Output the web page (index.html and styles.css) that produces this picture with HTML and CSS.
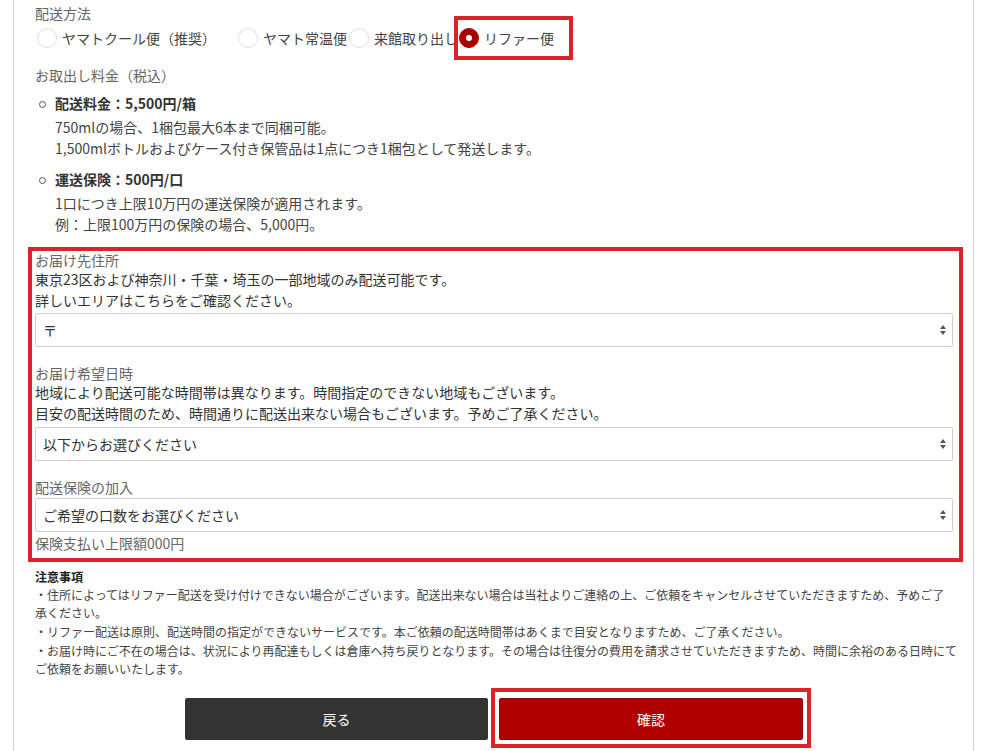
FILE: index.html
```html
<!DOCTYPE html>
<html lang="ja">
<head>
<meta charset="utf-8">
<title>配送方法</title>
<link rel="stylesheet" href="styles.css">
</head>
<body>
<div class="page">
  <div class="label">配送方法</div>
  <div class="radios">
    <label class="radio radio--first"><span class="dot"></span><span class="radio-text">ヤマトクール便（推奨）</span></label>
    <label class="radio radio--second"><span class="dot"></span><span class="radio-text">ヤマト常温便</span></label>
    <label class="radio radio--third"><span class="dot"></span><span class="radio-text">来館取り出し</span></label>
    <label class="radio radio--checked"><span class="dot"></span><span class="radio-text">リファー便</span></label>
  </div>

  <div class="label label--fees">お取出し料金（税込）</div>
  <ul class="fees">
    <li class="fee">
      <div class="fee-title">配送料金：5,500円/箱</div>
      <div class="fee-desc">750mlの場合、1梱包最大6本まで同梱可能。<br>1,500mlボトルおよびケース付き保管品は1点につき1梱包として発送します。</div>
    </li>
    <li class="fee">
      <div class="fee-title">運送保険：500円/口</div>
      <div class="fee-desc">1口につき上限10万円の運送保険が適用されます。<br>例：上限100万円の保険の場合、5,000円。</div>
    </li>
  </ul>

  <div class="marked">
    <div class="field-label">お届け先住所</div>
    <div class="field-text">東京23区および神奈川・千葉・埼玉の一部地域のみ配送可能です。<br>詳しいエリアはこちらをご確認ください。</div>
    <div class="select-wrap select-wrap--first">
      <select class="select"><option>〒</option></select>
      <svg class="arrows" width="6" height="10" viewBox="0 0 6 10"><path d="M3 0 L6 4 L0 4 Z M0 6 L6 6 L3 10 Z" fill="#555"/></svg>
    </div>

    <div class="field-label field-label--gap">お届け希望日時</div>
    <div class="field-text">地域により配送可能な時間帯は異なります。時間指定のできない地域もございます。<br>目安の配送時間のため、時間通りに配送出来ない場合もございます。予めご了承ください。</div>
    <div class="select-wrap select-wrap--second">
      <select class="select"><option>以下からお選びください</option></select>
      <svg class="arrows" width="6" height="10" viewBox="0 0 6 10"><path d="M3 0 L6 4 L0 4 Z M0 6 L6 6 L3 10 Z" fill="#555"/></svg>
    </div>

    <div class="field-label field-label--gap">配送保険の加入</div>
    <div class="select-wrap select-wrap--third">
      <select class="select"><option>ご希望の口数をお選びください</option></select>
      <svg class="arrows" width="6" height="10" viewBox="0 0 6 10"><path d="M3 0 L6 4 L0 4 Z M0 6 L6 6 L3 10 Z" fill="#555"/></svg>
    </div>
    <div class="field-note">保険支払い上限額000円</div>
  </div>

  <div class="notes">
    <div class="notes-title">注意事項</div>
    <p class="note">・住所によってはリファー配送を受け付けできない場合がございます。配送出来ない場合は当社よりご連絡の上、ご依頼をキャンセルさせていただきますため、予めご了<br>承ください。</p>
    <p class="note">・リファー配送は原則、配送時間の指定ができないサービスです。本ご依頼の配送時間帯はあくまで目安となりますため、ご了承ください。</p>
    <p class="note">・お届け時にご不在の場合は、状況により再配達もしくは倉庫へ持ち戻りとなります。その場合は往復分の費用を請求させていただきますため、時間に余裕のある日時にてご依頼をお願いいたします。</p>
  </div>

  <div class="actions">
    <button class="btn btn--back" type="button">戻る</button>
    <button class="btn btn--confirm" type="button">確認</button>
  </div>
</div>
</body>
</html>
```

FILE: styles.css
```css
* { box-sizing: border-box; }

html, body {
  margin: 0;
  padding: 0;
  background: #fff;
}

body {
  font-family: "Noto Sans CJK JP", "Noto Sans", sans-serif;
  font-size: 14px;
  color: #333;
  overflow: hidden;
}

.page {
  margin: 0 13px;
  min-height: 800px;
  border-left: 1px solid #d4d4d4;
  border-right: 1px solid #d4d4d4;
  padding: 3px 20px 0 21px;
}

.label {
  font-size: 14px;
  line-height: 21px;
  color: #666;
}

.label--fees {
  margin-top: 16px;
}

/* radios */
.radios {
  margin-top: 3px;
  height: 22px;
  display: flex;
  align-items: center;
}

.radio {
  position: relative;
  display: inline-flex;
  align-items: center;
  gap: 5px;
  height: 22px;
  color: #444;
  font-size: 14px;
  line-height: 22px;
  white-space: nowrap;
}

.radio--first { margin-left: 2px; margin-right: 22px; }
.radio--second { margin-right: 2px; }
.radio--third { margin-right: 1px; }

.dot {
  width: 20px;
  height: 20px;
  border-radius: 50%;
  border: 1px solid #e0e0e0;
  background: #fff;
  box-shadow: inset 0 1px 1px rgba(0,0,0,0.04);
  flex: none;
}

.radio--checked .dot {
  background: #a80000;
  border-color: #a80000;
  position: relative;
}

.radio--checked .dot::before {
  content: "";
  position: absolute;
  left: 6px;
  top: 6px;
  width: 6px;
  height: 6px;
  border-radius: 50%;
  background: #fff;
}

.radio--checked::after {
  content: "";
  position: absolute;
  left: -5px;
  right: -19px;
  top: -11px;
  bottom: -11px;
  border: 4px solid #dc2329;
  pointer-events: none;
}

/* fees */
.fees {
  list-style: none;
  margin: 7px 0 0 0;
  padding: 0 0 0 20px;
}

.fee + .fee {
  margin-top: 10px;
}

.fee-title {
  position: relative;
  font-weight: 700;
  line-height: 21px;
  color: #333;
}

.fee-title::before {
  content: "";
  position: absolute;
  left: -16px;
  top: 8px;
  width: 5px;
  height: 5px;
  border: 1px solid #555;
  border-radius: 50%;
}

.fee-desc {
  margin-top: 3px;
  line-height: 21px;
  color: #444;
}

/* marked box */
.marked {
  margin: 12px -10px 0 -7px;
  border: 4px solid #dc2329;
  padding: 0 6px 6px 3px;
}

.field-label {
  line-height: 18px;
  color: #666;
}

.field-label--gap {
  margin-top: 17px;
}

.field-text {
  line-height: 21px;
  color: #333;
}

.select-wrap {
  position: relative;
}

.select-wrap--first { margin-top: 2px; }
.select-wrap--second { margin-top: 3px; }
.select-wrap--third { margin-top: 2px; }

.select {
  display: block;
  width: 100%;
  height: 34px;
  margin: 0;
  padding: 0 20px 0 7px;
  border: 1px solid #cfcfcf;
  border-radius: 2px;
  background: #fff;
  font-family: inherit;
  font-size: 14px;
  color: #333;
  appearance: none;
  -webkit-appearance: none;
}

.arrows {
  position: absolute;
  right: 7px;
  top: 12px;
  pointer-events: none;
}

.field-note {
  margin-top: 2px;
  line-height: 18px;
  color: #666;
}

/* notes */
.notes {
  margin: 6px -8px 0 0;
  font-size: 12px;
  line-height: 18px;
  color: #444;
}

.notes-title {
  font-weight: 700;
  color: #222;
}

.note {
  margin: 0;
}

.note + .note {
  margin-top: 1px;
}

/* actions */
.actions {
  margin-top: 20px;
  display: flex;
  justify-content: center;
  gap: 11px;
}

.btn {
  height: 42px;
  border: none;
  border-radius: 2px;
  font-family: inherit;
  font-size: 14px;
  color: #fff;
  padding: 0;
}

.btn--back {
  width: 303px;
  background: #333;
}

.btn--confirm {
  position: relative;
  width: 304px;
  background: #b00000;
  border: 1px solid #8c0000;
}

.btn--confirm::after {
  content: "";
  position: absolute;
  left: -9px;
  right: -9px;
  top: -11px;
  bottom: -9px;
  border: 4px solid #dc2329;
  pointer-events: none;
}
```
